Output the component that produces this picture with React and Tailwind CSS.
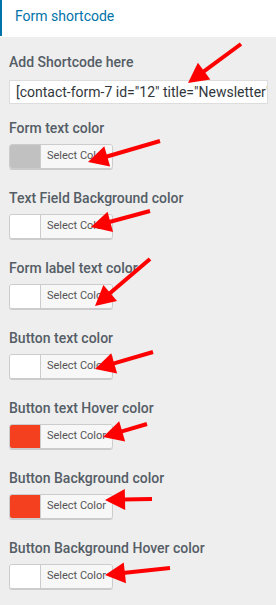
import React from "react";

const items = [
  { label: "Form text color", color: "#c1c1c1" },
  { label: "Text Field Background color", color: "#ffffff" },
  { label: "Form label text color", color: "#ffffff" },
  { label: "Button text color", color: "#ffffff" },
  { label: "Button text Hover color", color: "#f5401f" },
  { label: "Button Background color", color: "#f5401f" },
  { label: "Button Background Hover color", color: "#ffffff" },
];

const arrows = [
  { t: [241, 44], h: [188, 83] },
  { t: [160, 141], h: [88, 162] },
  { t: [150, 211], h: [91, 227] },
  { t: [150, 259], h: [95, 306] },
  { t: [153, 352], h: [95, 369] },
  { t: [147, 424], h: [103, 437] },
  { t: [152, 499], h: [105, 500] },
  { t: [170, 568], h: [105, 575] },
];

function Arrow({ t, h }) {
  const dx = h[0] - t[0];
  const dy = h[1] - t[1];
  const len = Math.hypot(dx, dy);
  const ux = dx / len;
  const uy = dy / len;
  const nx = -uy;
  const ny = ux;
  const L = 20;
  const W = 21;
  const bx = h[0] - ux * L;
  const by = h[1] - uy * L;
  const pts = [
    [h[0], h[1]],
    [bx + (nx * W) / 2, by + (ny * W) / 2],
    [bx - (nx * W) / 2, by - (ny * W) / 2],
  ]
    .map((p) => p.join(","))
    .join(" ");
  return (
    <g>
      <line
        x1={t[0]}
        y1={t[1]}
        x2={bx + ux * 2}
        y2={by + uy * 2}
        stroke="#ff0000"
        strokeWidth="4"
      />
      <polygon points={pts} fill="#ff0000" />
    </g>
  );
}

export default function App() {
  return (
    <div
      className="relative w-[276px] h-[605px] bg-[#eeeeee] overflow-hidden"
      style={{ fontFamily: "Roboto, 'Liberation Sans', sans-serif" }}
    >
      <div className="h-[37px] bg-white flex">
        <div className="w-[2px] h-[36px] bg-[#0073aa]" />
        <div className="pl-[13px] pt-[6px] text-[14px] leading-[20px] text-[#0073aa]">
          Form shortcode
        </div>
      </div>
      <div className="pl-[9px] pt-[15px] flex flex-col">
        <div className="text-[14px] leading-[20px] font-medium text-[#555d66]">
          Add Shortcode here
        </div>
        <div className="mt-[8px] w-[259px] h-[24px] bg-white border border-[#dddddd] pl-[6px] overflow-hidden whitespace-nowrap text-[14px] leading-[22px] text-[#32373c]">
          [contact-form-7 id="12" title="Newsletter"]
        </div>
        <div className="mt-[14px] flex flex-col">
          {items.map((it, i) => (
            <div key={i} className="flex flex-col h-[70px]">
              <div className="text-[14px] leading-[20px] font-medium text-[#555d66] whitespace-nowrap">
                {it.label}
              </div>
              <div className="mt-[6px] flex w-[104px] h-[25px] rounded-[3px] border border-[#cccccc] shadow-[0_1px_0_#cccccc] overflow-hidden">
                <div
                  className="w-[31px] h-full border-r border-[#cccccc]"
                  style={{ backgroundColor: it.color }}
                />
                <div className="flex-1 bg-[#f7f7f7] flex items-center justify-center text-[11px] text-[#555555]">
                  Select Color
                </div>
              </div>
            </div>
          ))}
        </div>
      </div>
      <svg
        className="absolute inset-0 pointer-events-none"
        width="276"
        height="605"
        viewBox="0 0 276 605"
      >
        {arrows.map((a, i) => (
          <Arrow key={i} t={a.t} h={a.h} />
        ))}
      </svg>
    </div>
  );
}
